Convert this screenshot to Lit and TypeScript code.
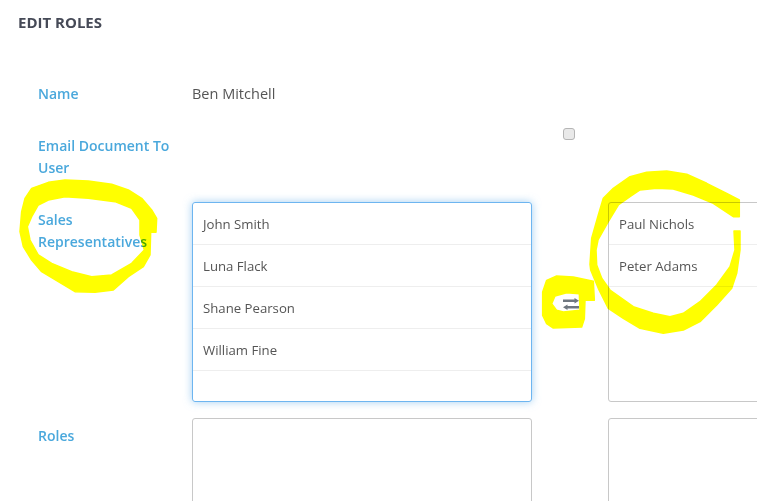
import { LitElement, html, css, svg } from "lit";
import { customElement } from "lit/decorators.js";

const LEFT = ["John Smith", "Luna Flack", "Shane Pearson", "William Fine"];
const RIGHT = ["Paul Nichols", "Peter Adams"];

@customElement("app-root")
export class AppRoot extends LitElement {
  static styles = css`
    :host {
      display: block;
      position: relative;
      width: 757px;
      height: 501px;
      overflow: hidden;
      background: #fff;
      font-family: "Open Sans", "Noto Sans", sans-serif;
      font-size: 14px;
      line-height: 22px;
      color: #555;
    }
    h1 {
      margin: 0;
      padding: 11px 0 0 18px;
      height: 76px;
      box-sizing: border-box;
      font-size: 15px;
      font-weight: 700;
      line-height: 22px;
      text-transform: uppercase;
      color: #464a57;
    }
    .row {
      display: grid;
      grid-template-columns: 154px 340px 76px 340px;
      padding-left: 38px;
      margin-bottom: 16px;
    }
    .label {
      padding: 7px 16px 7px 0;
      font-weight: 600;
      color: #4aa8dc;
    }
    .value {
      padding: 7px 0;
      grid-column: span 3;
      font-size: 14.5px;
    }
    .check {
      grid-column: 3;
      display: flex;
      justify-content: center;
      align-items: flex-start;
    }
    input {
      appearance: none;
      width: 12px;
      height: 12px;
      margin: 0 0 0 -2px;
      box-sizing: border-box;
      background: #e9e9e9;
      border: 1px solid #b5b5b5;
      border-radius: 3px;
    }
    .box {
      box-sizing: border-box;
      height: 200px;
      border: 1px solid #c8c8c8;
      border-radius: 3px;
      overflow: hidden;
    }
    .box.active {
      border-color: #6db5f0;
      box-shadow: 0 0 8px rgba(102, 175, 233, 0.6);
    }
    .item {
      height: 42px;
      box-sizing: border-box;
      padding: 10px;
      font-size: 13.2px;
      border-bottom: 1px solid #eee;
    }
    .swap {
      display: flex;
      align-items: center;
      justify-content: center;
      padding: 3px 0 0 2px;
    }
    .swap svg {
      display: block;
    }
    .scribble {
      position: absolute;
      left: 0;
      top: 0;
      pointer-events: none;
      mix-blend-mode: multiply;
    }
    .scribble path {
      stroke: #ffff00;
      stroke-width: 1.5px;
      stroke-linejoin: round;
      vector-effect: non-scaling-stroke;
    }
  `;

  private list(items: string[], active = false) {
    return html`<div class="box ${active ? "active" : ""}">
      ${items.map((n) => html`<div class="item">${n}</div>`)}
    </div>`;
  }

  render() {
    return html`
      <h1>Edit Roles</h1>
      <div class="row">
        <div class="label">Name</div>
        <div class="value">Ben Mitchell</div>
      </div>
      <div class="row">
        <div class="label">Email Document To User</div>
        <div class="check"><input type="checkbox" /></div>
      </div>
      <div class="row">
        <div class="label">Sales Representatives</div>
        ${this.list(LEFT, true)}
        <div class="swap">
          <svg width="16" height="12" viewBox="0 0 16 12" fill="#6f7780">
            <path d="M0 1.5h11.5V0L16 2.75 11.5 5.5V4H0z" />
            <path d="M16 8H4.5V6.5L0 9.25 4.5 12v-1.5H16z" />
          </svg>
        </div>
        ${this.list(RIGHT)}
      </div>
      <div class="row">
        <div class="label">Roles</div>
        ${this.list([])}
        <div></div>
        ${this.list([])}
      </div>
      <svg class="scribble" width="757" height="501" viewBox="0 0 757 501" fill="#ffff00">
        ${svg`
        <g transform="translate(15 175) scale(.33333)">
          <path fill-rule="evenodd" d="M50 40L100 22L150 15L220 18L290 28L340 45L380 70L410 105L425 130L423 172L407 172L405 240L385 275L340 305L295 345L240 352L180 350L130 320L80 290L50 255L25 215L15 170L20 110L30 70Z M70 90L50 125L37 155L45 195L70 240L110 265L170 290L230 305L290 300L350 265L388 225L375 180L375 135L350 100L300 80L220 70L150 65L100 75Z"/>
        </g>
        <path d="M739.3 216.7L739.3 200L726.7 193.3L706.7 183.3L686.7 174.3L666.7 171L646.7 172.3L630 176.7L613.3 188.3L603.3 198.3L598.3 215L591.7 238.3L590 264.3L590.7 270L598.3 288.3L608.3 308.3L623.3 318.3L640 328.3L663.3 333.3L683.3 330L700 321.7L716.7 305L731.7 288.3L736.7 273.3L740 250L740 231L734 231L735 250L730 266.7L716.7 285L700 301.7L683.3 313.3L670 316.7L653.3 313.3L633.3 306.7L610 290L601.7 278.3L596.7 265L596 250L598 240L608.3 221.7L618.3 205L630 196.7L640 190L656.7 188.3L673.3 189L693.3 195L713.3 203.3L733.3 216.7Z"/>
        <g transform="translate(540 272) scale(.33333)">
          <path fill-rule="evenodd" d="M8 60L20 25L50 12L100 15L160 28L163 85L135 85L133 140L125 165L40 168L20 155L8 130Z M35 95L50 115L70 120L120 115L118 65L80 62L45 72Z"/>
        </g>`}
      </svg>
    `;
  }
}
